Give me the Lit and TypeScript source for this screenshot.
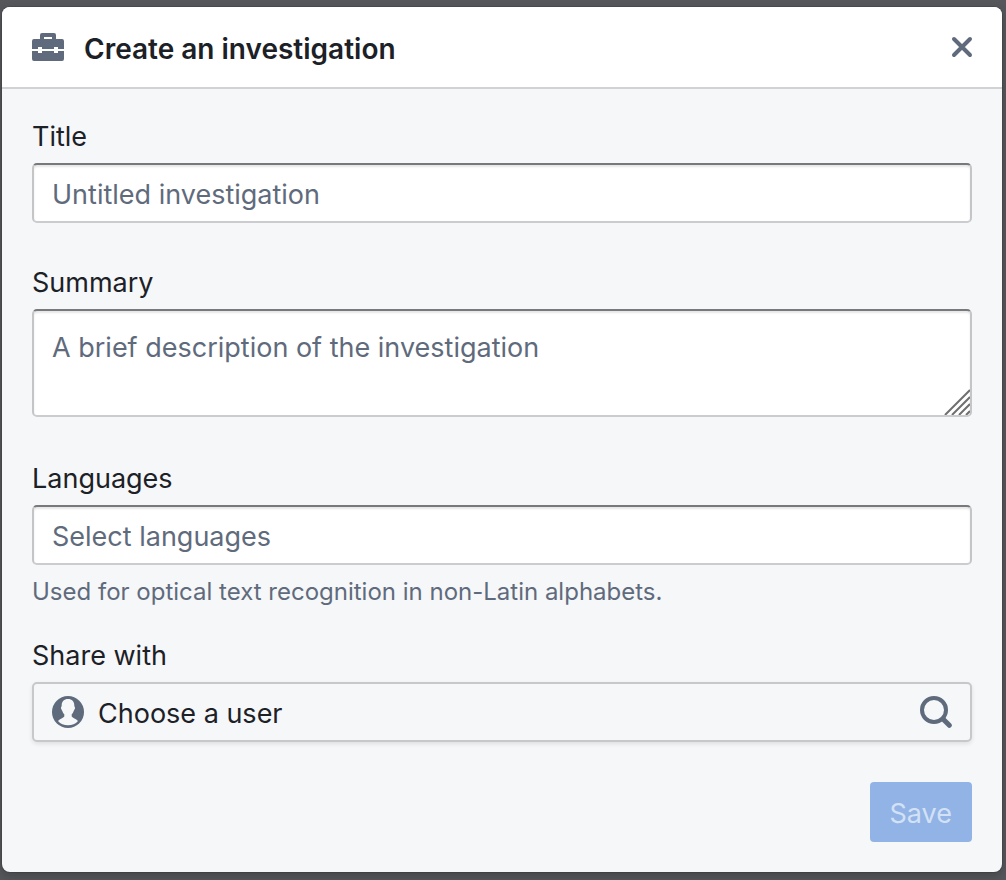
import { LitElement, html, css } from "lit";
import { customElement } from "lit/decorators.js";

@customElement("app-root")
export class AppRoot extends LitElement {
  static styles = css`
    :host {
      display: block;
      box-sizing: border-box;
      min-height: 100vh;
      padding: 7px 4px 8px 2px;
      background: #56575a;
      color: #1c2127;
      font: 400 27px/36px Inter, "Open Sans", sans-serif;
    }
    *, *::before, *::after { box-sizing: border-box; }
    svg { display: block; flex: none; }
    .dialog {
      border-radius: 8px;
      background: #f6f7f9;
      box-shadow: 0 0 0 1px rgba(17, 20, 24, 0.15), 0 4px 10px rgba(17, 20, 24, 0.25);
    }
    .header {
      display: flex;
      align-items: center;
      gap: 20px;
      height: 82px;
      padding: 0 20px 0 30px;
      background: #ffffff;
      border-bottom: 2px solid #d1d2d4;
      border-radius: 8px 8px 0 0;
      color: #5f6b7c;
    }
    .heading {
      flex: 1;
      margin: 0;
      padding-top: 3px;
      color: #1c2127;
      font-size: 28px;
      font-weight: 600;
      line-height: 36px;
    }
    .close {
      display: grid;
      place-items: center;
      width: 40px;
      height: 40px;
      padding: 0;
      border: 0;
      background: none;
      color: inherit;
      cursor: pointer;
    }
    .body { padding: 30px; }
    .field { display: flex; flex-direction: column; margin-bottom: 42px; }
    .tall { margin-bottom: 44px; }
    .hinted { margin-bottom: 28px; }
    .last { margin-bottom: 40px; }
    .label { margin-bottom: 8px; }
    .input {
      display: block;
      width: 100%;
      height: 60px;
      margin: 0;
      padding: 2px 18px 0;
      border: 2px solid;
      border-color: #77797c #c3c5c7 #cbcccf #c3c5c7;
      border-radius: 5px;
      outline: 0;
      background: #ffffff;
      box-shadow: inset 0 2px 2px rgba(17, 20, 24, 0.1);
      color: #1c2127;
      font: inherit;
    }
    .input::placeholder { color: #5f6b7c; opacity: 1; }
    .area { position: relative; }
    .multiline { height: 108px; padding: 19px 18px; resize: none; overflow: hidden; }
    .grip { position: absolute; right: 2px; bottom: 2px; pointer-events: none; }
    .hint { margin-top: 9px; color: #5f6b7c; font-size: 24px; }
    .picker {
      display: flex;
      align-items: center;
      gap: 14px;
      width: 100%;
      height: 60px;
      padding: 0 18px;
      border: 2px solid #c6c8ca;
      border-radius: 5px;
      background: #f6f7f9;
      box-shadow: 0 2px 4px rgba(17, 20, 24, 0.1);
      color: #5f6b7c;
      font: inherit;
      text-align: left;
    }
    .choice { flex: 1; padding-top: 3px; color: #1c2127; }
    .footer { display: flex; justify-content: flex-end; }
    .save {
      height: 60px;
      padding: 3px 20px 0;
      border: 0;
      border-radius: 4px;
      background: #92b3e5;
      color: #d3e1f5;
      font: inherit;
    }
  `;

  render() {
    return html`
      <section class="dialog" role="dialog" aria-labelledby="heading">
        <header class="header">
          <svg width="32" height="32" viewBox="0 0 32 32" fill="currentColor" aria-hidden="true">
            <path fill-rule="evenodd" d="M10 2h12q2 0 2 2v4h6q2 0 2 2v8h-6v-2h-4v2H10v-2H6v2H0v-8q0-2 2-2h6V4q0-2 2-2zm2 4v2h8V6z"/>
            <path d="M0 20h6v2h4v-2h12v2h4v-2h6v8q0 2-2 2H2q-2 0-2-2z"/>
          </svg>
          <h1 class="heading" id="heading">Create an investigation</h1>
          <button class="close" type="button" aria-label="Close">
            <svg width="24" height="24" viewBox="0 0 24 24" fill="none" stroke="currentColor" stroke-width="4" stroke-linecap="round">
              <path d="M4 4l16 16M20 4L4 20"/>
            </svg>
          </button>
        </header>
        <form class="body">
          <div class="field">
            <label class="label" for="title">Title</label>
            <input class="input" id="title" type="text" placeholder="Untitled investigation">
          </div>
          <div class="field tall">
            <label class="label" for="summary">Summary</label>
            <div class="area">
              <textarea class="input multiline" id="summary" placeholder="A brief description of the investigation"></textarea>
              <svg class="grip" width="26" height="26" viewBox="0 0 26 26" fill="none" stroke="#6f6f6f" stroke-width="2" aria-hidden="true">
                <path d="M1 26L26 1M8 26L26 8M15 26l11-11M22 26l4-4"/>
              </svg>
            </div>
          </div>
          <div class="field hinted">
            <label class="label" for="languages">Languages</label>
            <input class="input" id="languages" type="text" placeholder="Select languages" aria-describedby="hint">
            <span class="hint" id="hint">Used for optical text recognition in non-Latin alphabets.</span>
          </div>
          <div class="field last">
            <label class="label" for="share">Share with</label>
            <button class="picker" id="share" type="button">
              <svg width="32" height="32" viewBox="0 0 32 32" aria-hidden="true">
                <circle cx="16" cy="16" r="16" fill="currentColor"/>
                <path fill="#f6f7f9" d="M16 3c4 0 6.300 2.500 6.300 6.500 0 1 .7 1.400.7 2.500 0 1.300-.9 1.900-1.300 3-.5 1.600-1.200 2.500-2 3.300v2.200c1 1.700 4.300 2 6.300 4.500C23.500 28 20 29.200 16 29.200S8.500 28 6 25c2-2.500 5.300-2.800 6.300-4.500v-2.200c-.8-.8-1.500-1.700-2-3.300-.4-1.100-1.300-1.700-1.300-3 0-1.100.7-1.500.7-2.500C9.700 5.500 12 3 16 3z"/>
              </svg>
              <span class="choice">Choose a user</span>
              <svg width="32" height="32" viewBox="0 0 32 32" fill="none" stroke="currentColor" aria-hidden="true">
                <circle cx="14" cy="14" r="12" stroke-width="4"/>
                <path d="M23 23l6.300 6.300" stroke-width="5" stroke-linecap="round"/>
              </svg>
            </button>
          </div>
          <div class="footer">
            <button class="save" type="submit" disabled>Save</button>
          </div>
        </form>
      </section>
    `;
  }
}
